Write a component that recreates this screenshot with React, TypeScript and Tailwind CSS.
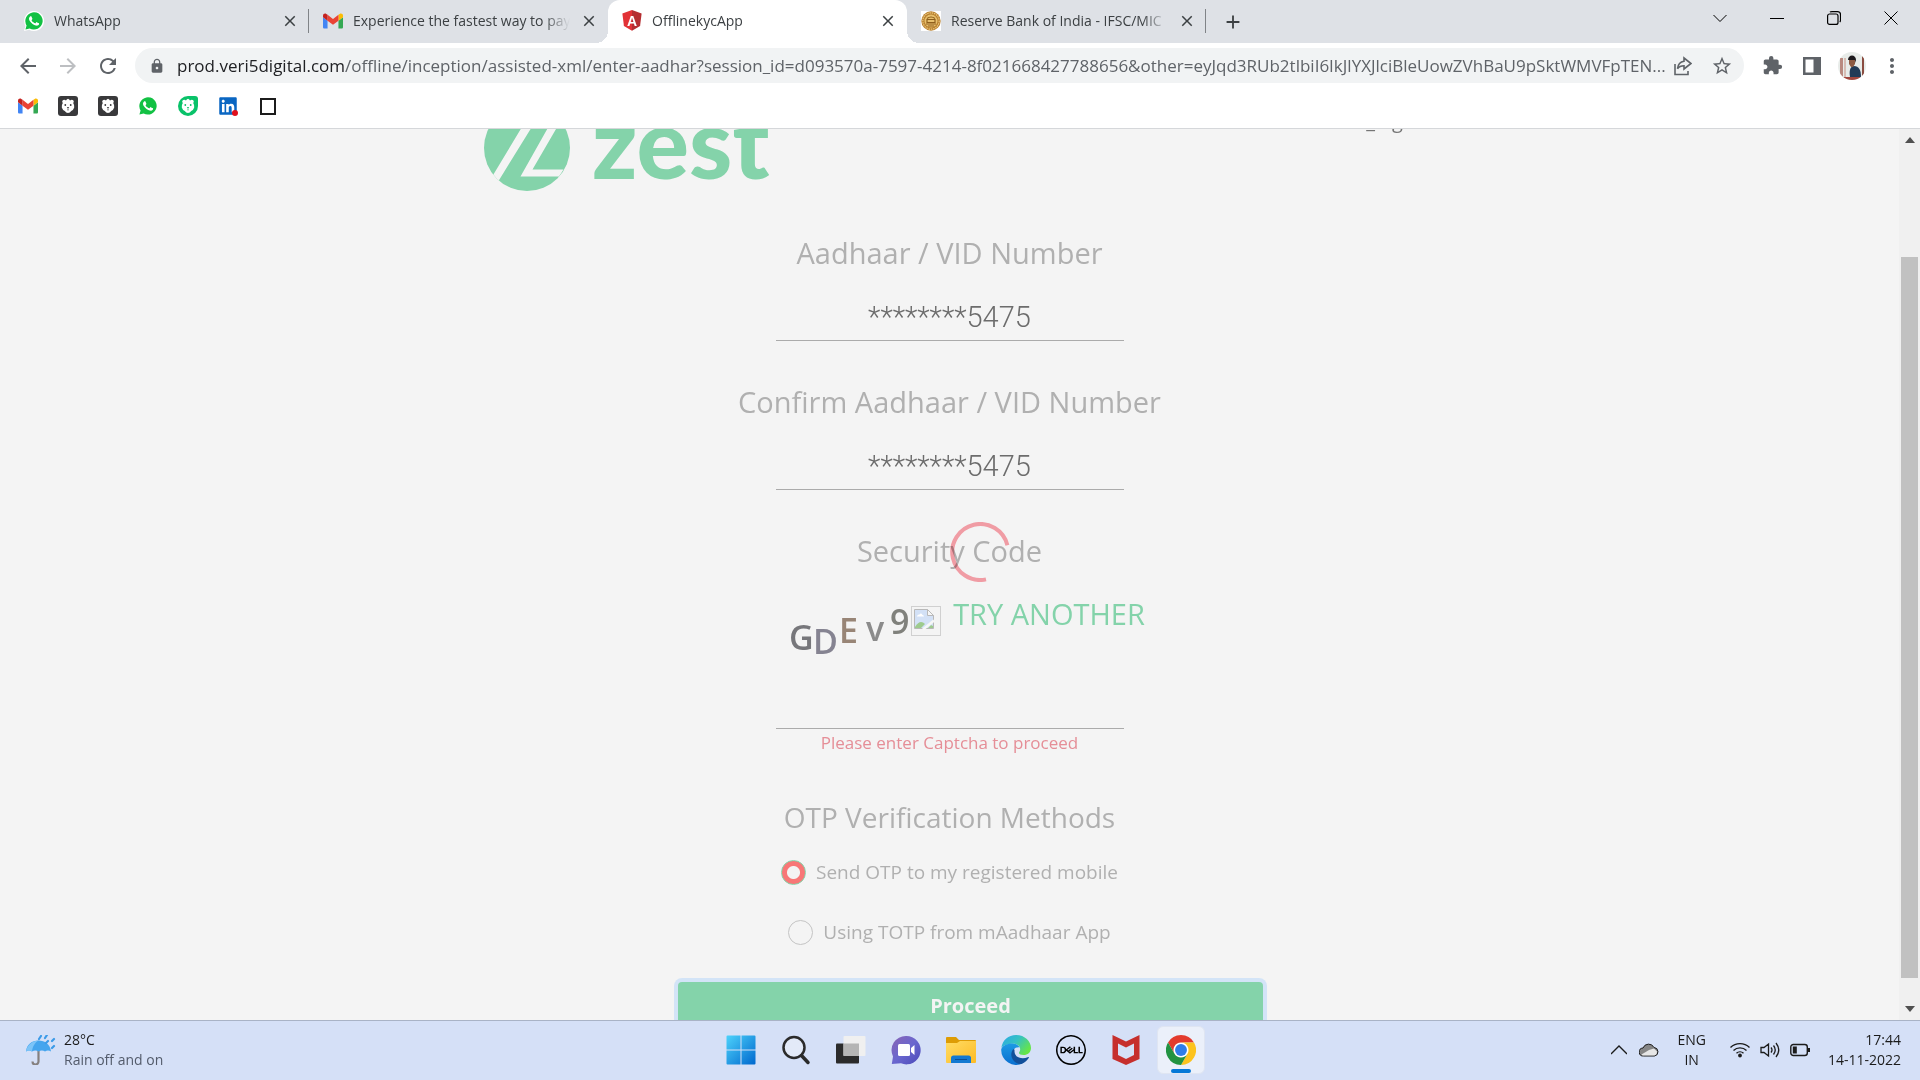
import React from "react";
import { SiDell } from "react-icons/si";
import { FaLinkedin } from "react-icons/fa";
import { MdExtension, MdLock, MdStarBorder, MdRefresh, MdArrowBack, MdArrowForward, MdMoreVert, MdClose, MdAdd } from "react-icons/md";

function Gmail() {
  return (
    <svg viewBox="52 42 88 66" className="h-4 w-5">
      <path fill="#4285f4" d="M58 108h14V74L52 59v43c0 3.32 2.69 6 6 6" />
      <path fill="#34a853" d="M120 108h14c3.32 0 6-2.69 6-6V59l-20 15" />
      <path fill="#fbbc04" d="M120 48v26l20-15v-8c0-7.42-8.47-11.65-14.4-7.2" />
      <path fill="#ea4335" d="M72 74V48l24 18 24-18v26L96 92" />
      <path fill="#c5221f" d="M52 51v8l20 15V48l-5.6-4.2c-5.94-4.45-14.4-.22-14.4 7.2" />
    </svg>
  );
}

function WhatsApp() {
  return (
    <svg viewBox="0 0 24 24" className="h-5 w-5">
      <path fill="#fff" d="M0 24l1.7-6.1A12 12 0 1 1 6.200 22.400z" />
      <path fill="#12c143" d="M1.700 22.300l1.400-5A10.400 10.400 0 1 1 6.800 20.900z" />
      <path
        fill="#fff"
        d="M17.470 14.380c-.3-.15-1.760-.87-2.030-.97-.27-.1-.47-.15-.67.150-.2.300-.77.970-.94 1.160-.17.200-.35.220-.64.070-.3-.15-1.260-.46-2.390-1.470-.88-.79-1.480-1.760-1.650-2.060-.17-.3-.02-.46.130-.61.130-.13.300-.35.440-.52.150-.17.200-.3.300-.5.100-.2.050-.37-.02-.52-.08-.15-.67-1.610-.92-2.210-.24-.58-.49-.5-.67-.51h-.57c-.2 0-.52.070-.79.370-.27.300-1.040 1.020-1.040 2.480s1.070 2.880 1.210 3.070c.15.200 2.100 3.200 5.080 4.490.71.300 1.260.49 1.690.63.710.22 1.360.19 1.870.12.570-.09 1.760-.72 2.010-1.410.25-.7.250-1.290.17-1.420-.07-.13-.27-.2-.57-.35z"
      />
    </svg>
  );
}

function Angular() {
  return (
    <svg viewBox="0 0 20 21" className="h-[21px] w-5">
      <path fill="#e23237" d="M10 0L0.400 3.500l1.500 12.600L10 20.700z" />
      <path fill="#b52e31" d="M10 0l9.600 3.500-1.500 12.600L10 20.700z" />
      <text x="10" y="15.500" fontSize="14" fontWeight="700" textAnchor="middle" fill="#fff" fontFamily="Liberation Sans, sans-serif">A</text>
    </svg>
  );
}

function BankSeal() {
  return (
    <svg viewBox="0 0 20 20" className="h-5 w-5">
      <rect width="20" height="20" fill="#fff" />
      <circle cx="10" cy="10" r="9.700" fill="#b9812f" />
      <circle cx="10" cy="10" r="8.200" fill="none" stroke="#e9c57c" strokeWidth="1.200" strokeDasharray="1.500 .8" />
      <circle cx="10" cy="10" r="6.500" fill="#e7bf6c" />
      <path d="M6 7.500q4-3 8 0M6 8.500h8v3H6zM5 13h10M7 15h6" stroke="#8f5f1c" strokeWidth="1.200" fill="none" />
    </svg>
  );
}

function Bear({ leaf }: { leaf?: boolean }) {
  return (
    <svg viewBox="0 0 20 20" className="h-5 w-5">
      {leaf ? <path fill="#09c269" d="M10 0h7a3 3 0 0 1 3 3v7A10 10 0 1 1 10 0z" /> : <rect width="20" height="20" rx="3" fill="#39393b" />}
      <path fill="#fff" d="M10 2.800q1.500.4 2 1.700 2-1.300 3.400 0 1 1.300-.2 2.600 1.300 2 1 4.500-.7 2.600-3 3.400-1.200 2-3.200 2t-3.200-2q-2.300-.8-3-3.400-.3-2.500 1-4.500-1.200-1.300-.2-2.600 1.400-1.300 3.400 0Q8.500 3.200 10 2.800z" />
      <g fill={leaf ? "#09c269" : "#39393b"}>
        <circle cx="7.300" cy="9" r=".9" />
        <circle cx="12.700" cy="9" r=".9" />
        <path d="M8.800 11h2.400L10 12.500zM9.600 12.500h.8v2h-.8z" />
      </g>
    </svg>
  );
}

function Avatar() {
  return (
    <svg viewBox="0 0 28 28" className="h-7 w-7">
      <defs>
        <clipPath id="face"><circle cx="14" cy="14" r="14" /></clipPath>
      </defs>
      <g clipPath="url(#face)">
        <rect width="28" height="28" fill="#e8ece9" />
        <rect x="2" y="6" width="3" height="22" fill="#b98a80" />
        <rect x="6" y="6" width="2" height="20" fill="#d7bdb4" />
        <rect x="24" y="3" width="2" height="25" fill="#8a4c40" />
        <rect y="25" width="28" height="3" fill="#a2473e" />
        <path fill="#223b57" d="M12 25c-1-6 0-11 4-11 5 0 7 4 7 11z" />
        <path fill="#8d5b43" d="M11 7h6v5l-2 3h-2l-2-3z" />
        <path fill="#1d1a1d" d="M10 8c0-6 8-6 8 0v3l-1-3h-6z" />
      </g>
    </svg>
  );
}

const tabs = [
  { title: "WhatsApp", icon: <WhatsApp />, active: false },
  { title: "Experience the fastest way to pay", icon: <Gmail />, active: false },
  { title: "OfflinekycApp", icon: <Angular />, active: true },
  { title: "Reserve Bank of India - IFSC/MIC", icon: <BankSeal />, active: false },
];

function TabStrip() {
  return (
    <header className="flex h-[43px] shrink-0 items-center bg-[#dee1e6] pl-2.5">
      {tabs.map((t, i) => (
        <div
          key={t.title}
          className={
            t.active
              ? "relative flex h-full w-[299px] items-center gap-2.5 rounded-t-xl bg-white pr-2.5 pb-0.5 pl-3.5"
              : "relative flex h-full w-[299px] items-center gap-2.5 pr-2.5 pb-0.5 pl-3.5"
          }
        >
          {t.active && (
            <>
              <span className="absolute bottom-0 -left-3 h-3 w-3 bg-[radial-gradient(circle_at_0_0,#dee1e6_12px,#fff_12px)]" />
              <span className="absolute -right-3 bottom-0 h-3 w-3 bg-[radial-gradient(circle_at_100%_0,#dee1e6_12px,#fff_12px)]" />
            </>
          )}
          {t.icon}
          <span className="min-w-0 flex-1 text-[14px] leading-5 whitespace-nowrap text-[#3c4043] [mask-image:linear-gradient(to_right,#000_88%,transparent)]">
            {t.title}
          </span>
          <button aria-label={"Close " + t.title} className="text-[#3c4043]"><MdClose className="h-[18px] w-[18px]" /></button>
          {(i === 0 || i === 3) && <span className="absolute right-0 h-6 w-px bg-[#808387]" />}
        </div>
      ))}
      <button aria-label="New tab" className="ml-4 text-[#3c4043]"><MdAdd className="h-[22px] w-[22px]" /></button>
      <div className="ml-auto flex h-full items-center pb-2 text-black">
        <button aria-label="Search tabs" className="flex w-[57px] justify-center">
          <svg viewBox="0 0 14 14" className="h-3.5 w-3.5" fill="none" stroke="currentColor"><path d="M.5 4L7 10.500 13.500 4" /></svg>
        </button>
        <button aria-label="Minimize" className="flex w-[57px] justify-center">
          <svg viewBox="0 0 14 14" className="h-3.5 w-3.5" fill="none" stroke="currentColor"><path d="M0 7.500h14" /></svg>
        </button>
        <button aria-label="Restore" className="flex w-[57px] justify-center">
          <svg viewBox="0 0 14 14" className="h-3.5 w-3.5" fill="none" stroke="currentColor" strokeWidth="1.200"><rect x=".6" y="3" width="10.400" height="10.400" rx="2" /><path d="M3 1.200Q3.500.6 5 .6h5.500q3 0 3 3V9q0 1.500-.8 2" /></svg>
        </button>
        <button aria-label="Close window" className="flex w-[58px] justify-center">
          <svg viewBox="0 0 14 14" className="h-3.5 w-3.5" fill="none" stroke="currentColor"><path d="M.5.5l13 13M13.500.5l-13 13" /></svg>
        </button>
      </div>
    </header>
  );
}

function Toolbar() {
  return (
    <div className="flex h-[45px] shrink-0 items-center bg-white px-2 text-[#5f6368]">
      <button aria-label="Back" className="flex w-10 justify-center"><MdArrowBack className="h-6 w-6" /></button>
      <button aria-label="Forward" className="flex w-10 justify-center text-[#bdbfc2]"><MdArrowForward className="h-6 w-6" /></button>
      <button aria-label="Reload" className="flex w-10 justify-center"><MdRefresh className="h-6 w-6" /></button>
      <div className="ml-[7px] flex h-[35px] min-w-0 flex-1 items-center rounded-full bg-[#f1f3f4] pr-1.5">
        <MdLock className="mr-3 ml-3.5 h-4 w-4 shrink-0" />
        <p className="min-w-0 flex-1 text-[17px] leading-6 whitespace-nowrap text-[#5f6368]">
          <span className="text-[#202124]">prod.veri5digital.com</span>/offline/inception/assisted-xml/enter-aadhar?session_id=d093570a-7597-4214-8f021668427788656&amp;other=eyJqd3RUb2tlbiI6IkJlYXJlciBleUowZVhBaU9pSktWMVFpTEN...
        </p>
        <button aria-label="Share" className="flex w-6 shrink-0 justify-center">
          <svg viewBox="0 0 20 20" className="h-5 w-5" fill="none" stroke="currentColor" strokeWidth="1.600"><path d="M3 8v10.500h13V15M12 2l7 5.500-7 5.500v-3.300c-3 0-5 .8-6.500 3C6 8.500 8 5.800 12 5.300z" /></svg>
        </button>
        <button aria-label="Bookmark" className="ml-3 flex w-8 shrink-0 justify-center"><MdStarBorder className="h-[22px] w-[22px]" /></button>
      </div>
      <button aria-label="Extensions" className="ml-2 flex w-10 justify-center"><MdExtension className="h-[21px] w-[21px]" /></button>
      <button aria-label="Side panel" className="flex w-10 justify-center">
        <svg viewBox="0 0 18 18" className="h-[18px] w-[18px]"><path fill="currentColor" fillRule="evenodd" d="M0 0h18v18H0zM2.500 2.500v13h8v-13z" /></svg>
      </button>
      <button aria-label="Profile" className="flex w-10 justify-center"><Avatar /></button>
      <button aria-label="Menu" className="flex w-10 justify-center"><MdMoreVert className="h-6 w-6" /></button>
    </div>
  );
}

function Bookmarks() {
  return (
    <nav className="flex h-[41px] shrink-0 items-center gap-5 border-b border-[#d5d7da] bg-white px-[18px] pb-1">
      <a href="#mail" aria-label="Mail"><Gmail /></a>
      <a href="#one" aria-label="Bear"><Bear /></a>
      <a href="#two" aria-label="Bear"><Bear /></a>
      <a href="#chat" aria-label="Chat"><WhatsApp /></a>
      <a href="#leaf" aria-label="Leaf"><Bear leaf /></a>
      <a href="#in" aria-label="LinkedIn" className="relative text-[#0a66c2]">
        <FaLinkedin className="h-5 w-5" />
        <span className="absolute right-0 bottom-0 h-1.5 w-1.5 rounded-full bg-[#e0101c]" />
      </a>
      <a href="#box" aria-label="Box" className="ml-0.5 h-[17px] w-4 border-2 border-[#1c1c1c]" />
    </nav>
  );
}

function FieldHeading({ htmlFor, children }: { htmlFor?: string; children: React.ReactNode }) {
  return <label htmlFor={htmlFor} className="block text-center text-[29px] leading-10 text-[#b0b0b0]">{children}</label>;
}

function Field({ id, value }: { id: string; value: string }) {
  return (
    <input
      id={id}
      defaultValue={value}
      className="block h-[45px] w-[348px] border-b border-[#ababab] bg-transparent pb-0.5 text-center font-['Roboto',sans-serif] text-[29px] font-light text-[#6c6c6c] outline-none"
    />
  );
}

function Captcha() {
  return (
    <svg viewBox="0 0 125 54" className="mt-3 h-[54px] w-[125px]" fontFamily="Open Sans, sans-serif" fontSize="34" fontWeight="600">
      <text x="3" y="44" fill="#77777b">G</text>
      <text x="27" y="48" fill="#858391">D</text>
      <text x="53" y="37" fill="#988576">E</text>
      <text x="80" y="35" fill="#8b8b8b">v</text>
      <text x="104" y="28" fill="#80817c">9</text>
    </svg>
  );
}

function BrokenImage() {
  return (
    <svg viewBox="0 0 30 30" className="mt-3 h-[30px] w-[30px]">
      <rect x=".5" y=".5" width="29" height="29" fill="none" stroke="#d0d0d0" />
      <path fill="#d3e1f6" stroke="#b9b9b9" d="M3.500 3.500h13l6 6v13h-19z" />
      <path fill="#f7f7f7" stroke="#b9b9b9" d="M16.500 3.500v6h6z" />
      <path fill="#fff" d="M6 10q1-2 2.500-1.500Q10 6.500 11.500 9q1.500 0 1.500 1.500H6z" />
      <path fill="#9ecb8e" d="M4 21q5-8 10-3l-4 4H4zM17 22l3-3 2 1v2z" />
      <path stroke="#f7f7f7" strokeWidth="2.500" d="M12 23.500l11-9" />
    </svg>
  );
}

function Page() {
  return (
    <main className="flex min-h-0 flex-1 bg-[#f4f4f4]">
      <div className="min-w-0 flex-1 overflow-hidden">
        <div className="mx-auto -mt-6 flex h-[86px] max-w-[931px] items-start justify-between">
          <div className="flex items-start gap-[22px] text-[#84d3aa]">
            <svg viewBox="0 0 86 86" className="h-[86px] w-[86px]">
              <defs><clipPath id="disc"><circle cx="43" cy="43" r="43" /></clipPath></defs>
              <g clipPath="url(#disc)">
                <rect width="86" height="86" fill="currentColor" />
                <path fill="#f4f4f4" d="M44 12L8.500 71l6 5L54 12zM70 12L36.500 71.500H75l4.500-7H48.500L79 12z" />
              </g>
            </svg>
            <span className="-mt-3.5 block font-['Lato',sans-serif] text-[98px] leading-[100px] font-black">zest</span>
          </div>
          <span className="text-[20px] leading-8 text-[#757575]">_logo</span>
        </div>
        <form className="mx-auto mt-[42px] flex w-[600px] flex-col items-center" onSubmit={(e) => e.preventDefault()}>
          <FieldHeading htmlFor="aadhaar">Aadhaar / VID Number</FieldHeading>
          <div className="mt-[23px]"><Field id="aadhaar" value="********5475" /></div>
          <div className="mt-[41px]"><FieldHeading htmlFor="confirm">Confirm Aadhaar / VID Number</FieldHeading></div>
          <div className="mt-[23px]"><Field id="confirm" value="********5475" /></div>
          <div className="relative mt-[41px]">
            <FieldHeading htmlFor="captcha">Security Code</FieldHeading>
            <svg viewBox="0 0 60 60" className="absolute -top-[9px] left-1/2 h-[60px] w-[60px] mix-blend-multiply" fill="none" stroke="#fba3ac" strokeWidth="4">
              <path d="M57.400 23.200A28 28 0 1 0 36 57.400" />
            </svg>
          </div>
          <div className="mt-[23px] flex h-[90px] items-start pl-8">
            <Captcha />
            <BrokenImage />
            <a href="#another" className="ml-3 text-[29px] leading-10 text-[#84d3aa]">TRY ANOTHER</a>
          </div>
          <Field id="captcha" value="" />
          <p className="mt-0.5 text-[17px] leading-6 text-[#e58e97]">Please enter Captcha to proceed</p>
          <fieldset className="mt-[42px] flex flex-col items-center text-[19px] leading-7 text-[#b0b0b0]">
            <legend className="mx-auto text-[28px] leading-10">OTP Verification Methods</legend>
            <label className="mt-[21px] flex items-center gap-2.5">
              <input type="radio" name="otp" defaultChecked className="h-[25px] w-[25px] appearance-none rounded-full border border-[#84d3aa] bg-[radial-gradient(circle,#f4f4f4_6px,#f87777_7px)]" />
              Send OTP to my registered mobile
            </label>
            <label className="mt-8 flex items-center gap-2.5">
              <input type="radio" name="otp" className="h-[25px] w-[25px] appearance-none rounded-full border border-[#c4c4c4]" />
              Using TOTP from mAadhaar App
            </label>
          </fieldset>
          <button className="mt-9 ml-[42px] h-12 w-[585px] rounded bg-[#84d3aa] text-[20px] leading-7 font-bold text-[#f4f4f4] ring-4 ring-[#d3e4f7]">Proceed</button>
        </form>
      </div>
      <div className="flex w-[21px] shrink-0 flex-col items-center justify-between bg-[#f0f0f0] py-2" aria-hidden="true">
        <svg viewBox="0 0 10 6" className="h-1.5 w-2.5"><path d="M0 6l5-6 5 6z" fill="#505050" /></svg>
        <div className="mt-[114px] mb-7 w-[17px] flex-1 bg-[#c1c1c1]" />
        <svg viewBox="0 0 10 6" className="h-1.5 w-2.5"><path d="M0 0l5 6 5-6z" fill="#505050" /></svg>
      </div>
    </main>
  );
}

function Edge() {
  return (
    <svg viewBox="0 0 30 30" className="h-[30px] w-[30px]">
      <defs>
        <linearGradient id="eTop" x1="0" y1="0" x2="1" y2=".6"><stop offset="0" stopColor="#2aa7e8" /><stop offset=".5" stopColor="#35c1c4" /><stop offset="1" stopColor="#66e548" /></linearGradient>
        <linearGradient id="eSide" x1="0" y1="0" x2="0" y2="1"><stop offset="0" stopColor="#1d9ae4" /><stop offset="1" stopColor="#0a6fd0" /></linearGradient>
      </defs>
      <path fill="url(#eTop)" d="M.3 13C1.500 5 7.500 0 15 0c9 0 15 6.500 15 13 0 4.500-3.500 7-7.300 7-3 0-4.700-1-4.700-2s1.200-1.500 1.200-4c0-3-3-5.200-7-5.200C7 8.800 2 10.500.3 13z" />
      <path fill="url(#eSide)" d="M.2 14.500C1 11 5.500 8.500 11 8.500c4.500 0 7 2 7.800 4-4.300-1-7.300 2.500-7.300 6 0 6 5 10 10.500 9.800A15 15 0 0 1 .2 14.500z" />
      <path fill="#11509b" d="M12.500 14c-2 2-3 5.500-1.500 9 1.700 4 5.500 6.500 9.500 6 3.500-1.500 6-4 7.200-6 .5-.9-.2-1.300-1-.8-5.500 2.800-13.200.3-13.200-5.700 0-1.200.3-2-1-2.500z" />
    </svg>
  );
}

function Chrome() {
  return (
    <svg viewBox="0 0 48 48" className="h-[30px] w-[30px]">
      <circle cx="24" cy="24" r="12" fill="#fff" />
      <path fill="#e33b2e" d="M24,12H44.781a23.994,23.994,0,0,0-41.564.003L13.608,30l.009-.002A11.985,11.985,0,0,1,24,12Z" />
      <path fill="#fcc31e" d="M34.391,30.003,24.001,48A23.994,23.994,0,0,0,44.780,12.003H23.999l-.003.009A11.985,11.985,0,0,1,34.391,30.003Z" />
      <path fill="#229342" d="M13.609,30.003,3.218,12.006A23.994,23.994,0,0,0,24.003,48L34.393,30.003l-.007-.007a11.985,11.985,0,0,1-20.778.007Z" />
      <circle cx="24" cy="24" r="9.500" fill="#2f7de9" />
    </svg>
  );
}

function Taskbar() {
  const slot = "flex h-12 w-[55px] items-center justify-center";
  return (
    <footer className="grid h-[60px] shrink-0 grid-cols-[1fr_auto_1fr] items-center border-t border-[#a9b3c6] bg-[#d5e0f7] pb-px text-[15px] leading-5 text-[#1b1b1b]">
      <div className="flex items-center gap-2 pl-[26px]">
        <svg viewBox="0 0 30 30" className="h-[30px] w-[30px]">
          <path d="M12.500 13v13.500a3 3 0 0 1-6 0" fill="none" stroke="#85807f" strokeWidth="2.200" />
          <path fill="#45a5ee" d="M0 16.500C1 9 6 5.500 12.500 5.500S24 9 25 16.500q-3-2-6 0-3-2-6.500 0-3-2-6.500 0-3-2-6 0z" />
          <path fill="#7cc4f8" d="M6 16.500c.5-5 3-9 6.500-11-5 .5-11 3-12.500 11q3-2 6 0z" />
          <path d="M13 4l2-3M19 3l2-3M20 8l2-2M26 6l2-2M26 13l2-2" stroke="#3c9be8" strokeWidth="2.200" strokeLinecap="round" />
        </svg>
        <div className="text-[14px]">
          <p>28°C</p>
          <p className="text-[#535b6b]">Rain off and on</p>
        </div>
      </div>
      <div className="flex items-center pl-0.5">
        <button aria-label="Start" className={slot}>
          <svg viewBox="0 0 30 30" className="h-[30px] w-[30px]">
            <defs><linearGradient id="win" x1="0" y1="0" x2="1" y2="1"><stop offset="0" stopColor="#4dd2fb" /><stop offset="1" stopColor="#0068ce" /></linearGradient></defs>
            <path fill="url(#win)" d="M1.500.5h13v14h-14v-13a1 1 0 0 1 1-1zM15.500.5h13a1 1 0 0 1 1 1v13h-14zM.5 15.500h14v14h-13a1 1 0 0 1-1-1zM15.500 15.500h14v13a1 1 0 0 1-1 1h-13z" />
          </svg>
        </button>
        <button aria-label="Search" className={slot}>
          <svg viewBox="0 0 30 30" className="h-[30px] w-[30px]" fill="none" stroke="#2b2b2b" strokeLinecap="round"><circle cx="13" cy="12.500" r="10.500" strokeWidth="2.500" fill="#e3eaf8" /><path d="M20.500 20.500l6.500 7" strokeWidth="3.500" /></svg>
        </button>
        <button aria-label="Task view" className={slot}>
          <svg viewBox="0 0 30 30" className="h-[30px] w-[30px]"><rect x="0" y="8.500" width="23" height="20" rx="1" fill="#2b2b2b" /><rect x="7.500" y="1" width="22" height="20" rx="1" fill="#f0f0f0" /><path d="M7.500 8.500H23V21H7.500z" fill="#b5b5b5" /></svg>
        </button>
        <button aria-label="Chat" className={slot}>
          <svg viewBox="0 0 30 30" className="h-[30px] w-[30px]">
            <defs><linearGradient id="chat" x1="0" y1="0" x2="1" y2="1"><stop offset="0" stopColor="#8a64b4" /><stop offset=".5" stopColor="#6a67cf" /><stop offset="1" stopColor="#4a49b8" /></linearGradient></defs>
            <path fill="url(#chat)" d="M15 1a14.200 14.200 0 1 1-5 27.300L.8 29 2 21.500A14.200 14.200 0 0 1 15 1z" />
            <rect x="7" y="9" width="12" height="12" rx="1.500" fill="#fff" /><path fill="#fff" d="M20 13l3.500-3v10L20 17z" />
          </svg>
        </button>
        <button aria-label="Files" className={slot}>
          <svg viewBox="0 0 30 30" className="h-[30px] w-[30px]">
            <path fill="#dd9c05" d="M0 3q0-1 1-1h9l3 3h16q1 0 1 1v6H0z" />
            <defs><linearGradient id="fold" x1="0" y1="0" x2="1" y2="1"><stop offset="0" stopColor="#ffdc65" /><stop offset="1" stopColor="#fdbb24" /></linearGradient></defs>
            <path fill="url(#fold)" d="M0 8h11l3-2h16v21q0 1-1 1H1q-1 0-1-1z" />
            <path fill="#1379d1" d="M5 28v-5q0-2.500 2.500-2.500h15Q25 20.500 25 23v5z" /><path d="M9 24.500h12" stroke="#0b4f97" />
          </svg>
        </button>
        <button aria-label="Edge" className={slot}><Edge /></button>
        <button aria-label="Dell" className={slot}><SiDell className="h-[30px] w-[30px] text-black" /></button>
        <button aria-label="McAfee" className={slot}>
          <svg viewBox="0 0 28 30" className="h-[30px] w-7"><path fill="#c62f2d" fillRule="evenodd" d="M.5 0L14 6.500 27.500 0v24L14 30 .5 24zM6 8.500V20l8 4 8-4V8.500L14 12.500z" /></svg>
        </button>
        <button aria-label="Chrome" className="flex w-[55px] justify-center">
          <span className="relative flex h-12 w-12 items-center justify-center rounded-md border border-[#dfe5f2] bg-[#ebf0fa]">
            <Chrome />
            <span className="absolute bottom-0 h-1 w-5 rounded-full bg-[#0678d7]" />
          </span>
        </button>
      </div>
      <div className="flex items-center justify-end pr-[19px]">
        <button aria-label="Hidden icons" className="mr-3">
          <svg viewBox="0 0 16 16" className="h-4 w-4" fill="none" stroke="#1b1b1b" strokeWidth="1.300"><path d="M0 12l8-8 8 8" /></svg>
        </button>
        <svg viewBox="0 0 20 14" className="mr-[18px] h-3.5 w-5">
          <path fill="#868686" stroke="#1b1b1b" d="M4.500 13A4 4 0 0 1 4 5a6 6 0 0 1 11-.5A4.300 4.300 0 0 1 15.500 13z" />
          <path fill="#e6e6e6" d="M2.500 11.500L10 7l5-1.500 3 3q0 4-3.500 4h-11z" />
        </svg>
        <p className="mr-6 text-center text-[14px]">ENG<br />IN</p>
        <svg viewBox="0 0 20 16" className="mr-2.5 h-4 w-5" fill="none" stroke="#1b1b1b" strokeWidth="1.400"><path d="M.5 5.500a13.500 13.500 0 0 1 19 0M3.500 8.500a9.300 9.300 0 0 1 13 0M6.500 11.300a5 5 0 0 1 7 0" /><circle cx="10" cy="13.500" r="1.200" fill="#1b1b1b" /></svg>
        <svg viewBox="0 0 20 18" className="mr-2.5 h-[18px] w-5" fill="none" stroke="#1b1b1b" strokeWidth="1.300"><path d="M1 6.500h3L8.500 3v12L4 11.500H1zM11 6.500q2 2.500 0 5M13.500 4.500q3.500 4.500 0 9M16 2q5.500 7 0 14" /></svg>
        <svg viewBox="0 0 20 14" className="mr-[18px] h-3.5 w-5"><rect x=".8" y="1.500" width="16.500" height="11" rx="2.500" fill="none" stroke="#1b1b1b" strokeWidth="1.400" /><rect x="2.800" y="3.500" width="4" height="7" fill="#1b1b1b" /><rect x="18" y="5" width="2" height="4" fill="#1b1b1b" /></svg>
        <p className="text-right text-[14px]">17:44<br />14-11-2022</p>
      </div>
    </footer>
  );
}

export default function App() {
  return (
    <div className="flex h-screen flex-col overflow-hidden font-['Open_Sans','Noto_Sans',sans-serif]">
      <TabStrip />
      <Toolbar />
      <Bookmarks />
      <Page />
      <Taskbar />
    </div>
  );
}
